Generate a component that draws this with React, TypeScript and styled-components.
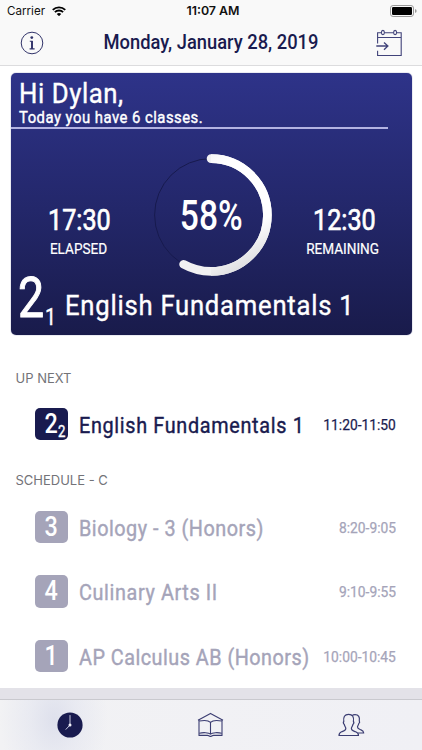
import React from "react";
import styled, { createGlobalStyle } from "styled-components";

const navy = "#191b4f";
const faded = "#a5a4b9";

const GlobalStyle = createGlobalStyle`
  *, *::before, *::after { box-sizing: border-box; }
  html, body { margin: 0; padding: 0; background: #fff; }
  body { overflow: hidden; }
`;

const Screen = styled.div`
  width: 422px;
  height: 750px;
  display: flex;
  flex-direction: column;
  overflow: hidden;
  background: #fff;
  color: ${navy};
  font-family: Roboto, "Liberation Sans", sans-serif;
`;

const Condensed = styled.span<{
  $size: number;
  $scale?: number;
  $spacing?: number;
  $weight?: number;
  $stroke?: number;
  $origin?: string;
}>`
  display: inline-block;
  flex: none;
  white-space: nowrap;
  font-size: ${(p) => p.$size}px;
  font-weight: ${(p) => p.$weight ?? 400};
  letter-spacing: ${(p) => p.$spacing ?? 0}px;
  -webkit-text-stroke: ${(p) => p.$stroke ?? 0.4}px currentColor;
  transform: scaleX(${(p) => p.$scale ?? 1});
  transform-origin: ${(p) => p.$origin ?? "left"} center;
`;

const Top = styled.header`
  flex: none;
  height: 66px;
  background: #f9f9f9;
  border-bottom: 1px solid #dcdcde;
`;

const StatusBar = styled.div`
  height: 22px;
  display: grid;
  grid-template-columns: 1fr auto 1fr;
  align-items: center;
  padding: 0 5px 0 7px;
  color: #111;
  font: 400 11.6px/22px Inter, "Liberation Sans", sans-serif;
`;

const Carrier = styled.div`
  display: flex;
  align-items: center;
  gap: 7px;
`;

const Clock = styled.div`
  padding-left: 2px;
  font-weight: 600;
  font-size: 12.4px;
`;

const BatterySlot = styled.div`
  display: flex;
  justify-content: flex-end;
`;

const NavBar = styled.div`
  height: 42px;
  display: grid;
  grid-template-columns: 64px 1fr 66px;
  align-items: center;
  justify-items: center;
  line-height: 42px;
`;

const Card = styled.section`
  flex: none;
  height: 262px;
  margin: 6.5px 10.5px 0 10.5px;
  border-radius: 5px;
  color: #fff;
  background: linear-gradient(#2e3389, #23276a 52%, #191b4b);
  box-shadow: 0 0 1px #30357c;
`;

const CardHeader = styled.div`
  width: 377px;
  height: 56.5px;
  padding: 8px 0 0 8px;
  display: flex;
  flex-direction: column;
  align-items: flex-start;
  border-bottom: 2px solid #b3b3e2;
`;

const Greeting = styled.div`
  height: 26px;
  line-height: 26px;
`;

const Summary = styled.div`
  height: 20px;
  margin-top: 1px;
  line-height: 20px;
`;

const Stats = styled.div`
  height: 149px;
  padding-top: 22px;
  display: grid;
  grid-template-columns: 136.5px 128px 1fr;
  justify-items: center;
`;

const Stat = styled.div`
  display: flex;
  flex-direction: column;
  align-items: center;
  padding-top: 54px;
`;

const StatValue = styled.div`
  height: 30px;
  padding-left: 2px;
  line-height: 30px;
`;

const StatLabel = styled.div`
  height: 28px;
  padding-right: 1px;
  line-height: 28px;
`;

const Ring = styled.div`
  display: grid;
  width: 128px;
  height: 128px;
  place-items: center;
  > * { grid-area: 1 / 1; }
`;

const Current = styled.div`
  display: flex;
  height: 56px;
  padding-left: 7px;
`;

const PeriodNumber = styled.div`
  width: 27px;
  line-height: 40px;
`;

const PeriodPart = styled.div`
  width: 20.5px;
  padding-top: 29px;
  line-height: 22px;
`;

const CurrentName = styled.div`
  line-height: 55px;
`;

const SectionTitle = styled.h2<{ $height: number }>`
  flex: none;
  height: ${(p) => p.$height}px;
  margin: 0 0 6.5px;
  padding-left: 15.5px;
  display: flex;
  align-items: flex-end;
  color: #737378;
  font: 400 13px/16px Inter, "Liberation Sans", sans-serif;
`;

const Row = styled.div<{ $past?: boolean }>`
  flex: none;
  height: 64.4px;
  padding: 0 26px 0 35px;
  display: flex;
  align-items: center;
  color: ${(p) => (p.$past ? faded : navy)};
`;

const Badge = styled.div<{ $past?: boolean }>`
  flex: none;
  width: 32.6px;
  height: 32.6px;
  margin-right: 11px;
  border-radius: 5px;
  display: flex;
  justify-content: center;
  color: #fff;
  line-height: 32.6px;
  background: ${(p) => (p.$past ? faded : navy)};
`;

const BadgePart = styled.div`
  width: 8px;
  margin: 0 -7px 0 -1px;
  padding-top: 15px;
  line-height: 18px;
`;

const RowName = styled.div`
  flex: 1;
  min-width: 0;
  padding-top: 3px;
`;

const RowTime = styled.div`
  display: flex;
  justify-content: flex-end;
  padding-top: 2px;
`;

const TabBar = styled.nav`
  flex: none;
  height: 62px;
  margin-top: auto;
  border-top: 11px solid #e3e2e8;
`;

const Tabs = styled.div`
  height: 51px;
  border-top: 1px solid #c9c9ce;
  display: grid;
  grid-template-columns: repeat(3, 140.6px);
  align-items: center;
  justify-items: center;
  background:
    radial-gradient(ellipse 54px 80px at 54px 20px, rgba(214, 217, 233, 0.7), rgba(222, 225, 238, 0.45) 45%, rgba(240, 240, 245, 0)),
    linear-gradient(90deg, #f2f2f4, #f0f0f5);
`;

const InfoIcon = () => (
  <svg width="24" height="24" viewBox="0 0 24 24" fill="none" stroke="#32346a">
    <circle cx="12" cy="12" r="10.8" strokeWidth="1" />
    <circle cx="11.8" cy="6.6" r="1.4" fill="#32346a" stroke="none" />
    <path d="M9.8 10.2h2.3v7.6M9.6 17.9h5" strokeWidth="1.1" />
    <path d="M12 10v8" strokeWidth="1.9" />
  </svg>
);

const CalendarIcon = () => (
  <svg width="26" height="28" viewBox="0 0 26 28" fill="none" stroke="#41437a" strokeWidth="1.1">
    <path d="M1.6 14.5V3.7h3.8M8.4 3.7h9M20.6 3.7h4.6v22.8H1.6v-4.8M1.6 8.5h23.6" />
    <ellipse cx="6.9" cy="3.5" rx="1.5" ry="2.1" />
    <ellipse cx="19.1" cy="3.5" rx="1.5" ry="2.1" />
    <path d="M.3 17h11.2M8 13.4l3.9 3.6L8 20.8" strokeWidth="1.3" />
  </svg>
);

const WifiIcon = () => (
  <svg width="14" height="10.5" viewBox="0 0 15 11" fill="none" stroke="#000" strokeWidth="2">
    <path d="M.8 4.1a9.6 9.6 0 0 1 13.4 0M3.1 6.5a6.3 6.3 0 0 1 8.8 0" />
    <path d="M7.5 10.8 5.1 8.5a3.4 3.4 0 0 1 4.8 0Z" fill="#000" stroke="none" />
  </svg>
);

const BatteryIcon = () => (
  <svg width="27" height="12" viewBox="0 0 27 12">
    <rect x=".5" y=".5" width="23" height="11" rx="2.6" fill="none" stroke="#999" />
    <rect x="2" y="2" width="20" height="8" rx="1.2" />
    <path d="M25 4v4c1.2-.5 1.6-1.1 1.6-2S26.2 4.5 25 4Z" fill="#999" />
  </svg>
);

const ProgressRing = ({ value }: { value: number }) => {
  const r = 56.4;
  const length = 2 * Math.PI * r;
  return (
    <svg width="128" height="128" viewBox="1 1 128 128" fill="none">
      <defs>
        <linearGradient id="arc" x1="30" y1="0" x2="100" y2="125" gradientUnits="userSpaceOnUse">
          <stop offset="0" stopColor="#eaeaec" />
          <stop offset=".25" stopColor="#fff" />
          <stop offset=".72" stopColor="#fff" />
          <stop offset=".94" stopColor="#e0e0e3" />
        </linearGradient>
      </defs>
      <circle cx="65" cy="65" r={r} stroke="#171a4e" strokeWidth="1" />
      <circle
        cx="65"
        cy="65"
        r={r}
        stroke="#f1f1f3"
        strokeWidth="8.6"
        strokeLinecap="round"
        strokeDasharray={`${(length * value) / 100} ${length}`}
        transform="rotate(-90 65 65)"
      />
      <path d="M65 8.6A56.4 56.4 0 1 1 65 121.4" stroke="url(#arc)" strokeWidth="8.6" />
    </svg>
  );
};

const ClockIcon = () => (
  <svg width="26" height="26" viewBox="0 0 26 26" fill="none">
    <circle cx="13" cy="13" r="12.6" fill={navy} />
    <path d="M13 3.5V13l-4 4.3" stroke="#c9cae0" strokeWidth="1" strokeLinecap="round" />
    <circle cx="13" cy="13" r="1.5" fill="#f2f2fa" />
  </svg>
);

const BookIcon = () => (
  <svg width="27" height="26" viewBox="0 0 27 26" fill="none" stroke="#3b3d72" strokeWidth="1.1" strokeLinejoin="round">
    <path d="M1 8.2 13.5 1.4 26 8.2" />
    <path d="M2 7.8v15.6h8.5c1.500 0 2 1 3 1s1.500-1 3-1H25V7.800" />
    <path d="M13.500 10.400C11.500 8.300 6.800 8.100 2.200 9M13.500 10.400c2-2.100 6.700-2.300 11.300-1.400M13.500 10.400v11.400M2.200 21.200c3.800-.9 9.500-.8 11.300.9 1.800-1.700 7.500-1.800 11.300-.9" />
  </svg>
);

const PeopleIcon = () => (
  <svg width="27" height="24" viewBox="0 0 27 24" fill="none" stroke="#3b3d72" strokeWidth="1.2" strokeLinejoin="round">
    <path d="M1 22.5c0-2 .8-3 2.600-3.700 2.500-1 4.200-1.200 4.200-3.300 0-1.400-1.200-2-1.500-4.100-.8-.6-1-2.200-.5-3C5.200 4.200 6.500 1.300 10.600 1.300s5.500 2.900 4.800 7.100c.5.800.3 2.400-.5 3-.3 2.100-1.500 2.700-1.500 4.100 0 2.100 1.700 2.300 4.200 3.300 1.800.7 2.900 1.700 2.900 3.700Z" />
    <path d="M14 2.600c1-.8 2-.9 3-.9 3.700 0 4.900 2.500 4.300 6.200.4.700.2 2.100-.5 2.600-.3 1.800-1.300 2.300-1.300 3.500 0 1.900 1.500 2.100 3.500 2.900 1.800.7 2.600 1.500 2.700 3.100h-6" />
  </svg>
);

type Lesson = { period: string; part?: string; name: string; spacing: number; time: string };

const upNext: Lesson = {
  period: "2",
  part: "2",
  name: "English Fundamentals 1",
  spacing: 0.75,
  time: "11:20-11:50",
};

const schedule: Lesson[] = [
  { period: "3", name: "Biology - 3 (Honors)", spacing: 0.57, time: "8:20-9:05" },
  { period: "4", name: "Culinary Arts II", spacing: 0.7, time: "9:10-9:55" },
  { period: "1", name: "AP Calculus AB (Honors)", spacing: 0.54, time: "10:00-10:45" },
];

const LessonRow = ({ lesson, past }: { lesson: Lesson; past?: boolean }) => (
  <Row $past={past}>
    <Badge $past={past}>
      <Condensed $size={28.5} $weight={500} $stroke={0} $scale={0.82} $origin="center">
        {lesson.period}
      </Condensed>
      {lesson.part && (
        <BadgePart>
          <Condensed $size={16.5} $scale={0.8}>{lesson.part}</Condensed>
        </BadgePart>
      )}
    </Badge>
    <RowName>
      <Condensed $size={22} $scale={0.9} $spacing={lesson.spacing}>{lesson.name}</Condensed>
    </RowName>
    <RowTime>
      <Condensed $size={15} $scale={0.92} $stroke={0.25} $origin="right">{lesson.time}</Condensed>
    </RowTime>
  </Row>
);

const StatBlock = ({ value, label }: { value: string; label: string }) => (
  <Stat>
    <StatValue>
      <Condensed $size={30} $scale={0.84} $stroke={0.7} $origin="center">{value}</Condensed>
    </StatValue>
    <StatLabel>
      <Condensed $size={14} $scale={0.97} $stroke={0.2} $origin="center">{label}</Condensed>
    </StatLabel>
  </Stat>
);

export default function App() {
  return (
    <Screen>
      <GlobalStyle />
      <Top>
        <StatusBar>
          <Carrier>Carrier <WifiIcon /></Carrier>
          <Clock>11:07 AM</Clock>
          <BatterySlot><BatteryIcon /></BatterySlot>
        </StatusBar>
        <NavBar>
          <InfoIcon />
          <Condensed $size={19.5} $weight={500} $stroke={0} $scale={0.94} $origin="55%">
            Monday, January 28, 2019
          </Condensed>
          <CalendarIcon />
        </NavBar>
      </Top>
      <Card>
        <CardHeader>
          <Greeting><Condensed $size={28} $scale={0.92} $spacing={0.6}>Hi Dylan,</Condensed></Greeting>
          <Summary>
            <Condensed $size={16.5} $scale={0.9} $spacing={0.54}>Today you have 6 classes.</Condensed>
          </Summary>
        </CardHeader>
        <Stats>
          <StatBlock value="17:30" label="ELAPSED" />
          <Ring>
            <ProgressRing value={58} />
            <Condensed $size={43} $weight={500} $stroke={0} $scale={0.78} $origin="center">58%</Condensed>
          </Ring>
          <StatBlock value="12:30" label="REMAINING" />
        </Stats>
        <Current>
          <PeriodNumber><Condensed $size={56} $scale={0.83} $stroke={1}>2</Condensed></PeriodNumber>
          <PeriodPart><Condensed $size={23} $scale={0.85}>1</Condensed></PeriodPart>
          <CurrentName>
            <Condensed $size={28.5} $scale={0.9} $spacing={0.84}>English Fundamentals 1</Condensed>
          </CurrentName>
        </Current>
      </Card>
      <SectionTitle $height={51}>UP NEXT</SectionTitle>
      <LessonRow lesson={upNext} />
      <SectionTitle $height={32}>SCHEDULE - C</SectionTitle>
      {schedule.map((lesson) => (
        <LessonRow key={lesson.period} lesson={lesson} past />
      ))}
      <TabBar>
        <Tabs>
          <ClockIcon />
          <BookIcon />
          <PeopleIcon />
        </Tabs>
      </TabBar>
    </Screen>
  );
}
